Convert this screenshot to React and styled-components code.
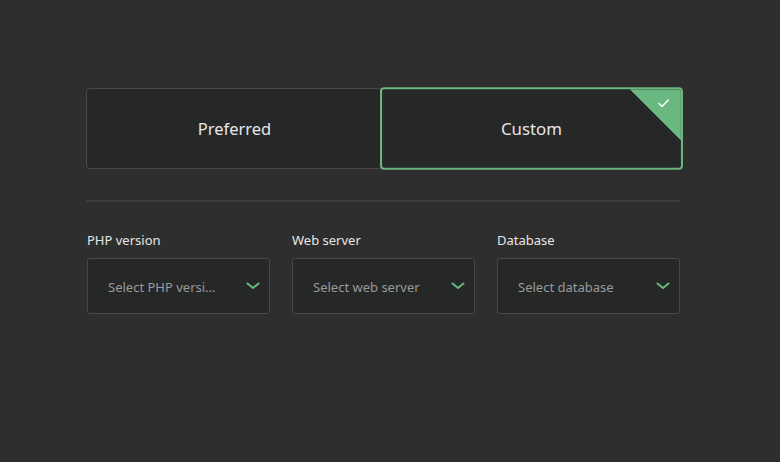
import React from "react";
import styled, { createGlobalStyle } from "styled-components";

const COLORS = {
  PAGE: "#2e2e2e",
  PANEL: "#262727",
  BORDER: "#484848",
  GREEN: "#6ab77f",
  TEXT: "#e6e6e6",
  MUTED: "#9a9a9a",
};

const GlobalStyle = createGlobalStyle`
  html, body {
    margin: 0;
    background: ${COLORS.PAGE};
    font-family: "Noto Sans", Lato, sans-serif;
  }
`;

const Page = styled.div`
  width: 780px;
  height: 462px;
  box-sizing: border-box;
  padding: 88px 0 0 86px;
`;

const Content = styled.div`
  width: 594px;
`;

const Choices = styled.div`
  display: grid;
  grid-template-columns: 297px 297px;
`;

const Choice = styled.div`
  position: relative;
  height: 81px;
  box-sizing: border-box;
  display: flex;
  align-items: center;
  justify-content: center;
  background: ${COLORS.PANEL};
  border: ${(p) => (p.$selected ? `2px solid ${COLORS.GREEN}` : `1px solid ${COLORS.BORDER}`)};
  border-radius: 4px;
  color: ${COLORS.TEXT};
  font-size: 16.5px;
  overflow: hidden;
  transform: ${(p) => (p.$selected ? "scale(1.02)" : "none")};
  z-index: ${(p) => (p.$selected ? 1 : 0)};
`;

const Corner = styled.div`
  position: absolute;
  top: 0;
  right: 0;
  width: 50px;
  height: 50px;
  background: linear-gradient(45deg, transparent 50%, ${COLORS.GREEN} 50%);
`;

const Check = styled.svg`
  position: absolute;
  top: 9px;
  right: 11px;
`;

const Divider = styled.hr`
  border: 0;
  height: 2px;
  background: #3b3b3b;
  margin: 31px 0 0;
`;

const Fields = styled.div`
  display: grid;
  grid-template-columns: repeat(3, 183px);
  column-gap: 22px;
  margin: 28px 0 0 1px;
`;

const Field = styled.div`
  display: flex;
  flex-direction: column;
`;

const Label = styled.label`
  color: ${COLORS.TEXT};
  font-size: 13px;
  height: 18px;
  line-height: 18px;
  margin-top: 1px;
  margin-bottom: 9px;
`;

const Select = styled.div`
  height: 56px;
  box-sizing: border-box;
  display: flex;
  align-items: center;
  padding: 0 9px 0 20px;
  background: ${COLORS.PANEL};
  border: 1px solid ${COLORS.BORDER};
  border-radius: 3px;
  color: ${COLORS.MUTED};
  font-size: 13px;
`;

const Placeholder = styled.span`
  flex: 1;
  max-width: 112px;
  white-space: nowrap;
  overflow: hidden;
  text-overflow: ellipsis;
  padding-top: 1px;
`;

const Chevron = () => (
  <svg width="14" height="8" viewBox="0 0 14 8" style={{ marginLeft: "auto" }}>
    <path d="M1.5 1.5 L7 6 L12.5 1.5" fill="none" stroke={COLORS.GREEN} strokeWidth="2" strokeLinecap="round" strokeLinejoin="round" />
  </svg>
);

const fields = [
  { label: "PHP version", placeholder: "Select PHP version" },
  { label: "Web server", placeholder: "Select web server" },
  { label: "Database", placeholder: "Select database" },
];

export default function App() {
  return (
    <Page>
      <GlobalStyle />
      <Content>
        <Choices>
          <Choice>Preferred</Choice>
          <Choice $selected>
            Custom
            <Corner>
              <Check width="12" height="10" viewBox="0 0 12 10">
                <path d="M1.5 5 L4.5 8 L10.5 1.5" fill="none" stroke="#fff" strokeWidth="1.4" strokeLinecap="round" strokeLinejoin="round" />
              </Check>
            </Corner>
          </Choice>
        </Choices>
        <Divider />
        <Fields>
          {fields.map((f) => (
            <Field key={f.label}>
              <Label>{f.label}</Label>
              <Select>
                <Placeholder>{f.placeholder}</Placeholder>
                <Chevron />
              </Select>
            </Field>
          ))}
        </Fields>
      </Content>
    </Page>
  );
}
